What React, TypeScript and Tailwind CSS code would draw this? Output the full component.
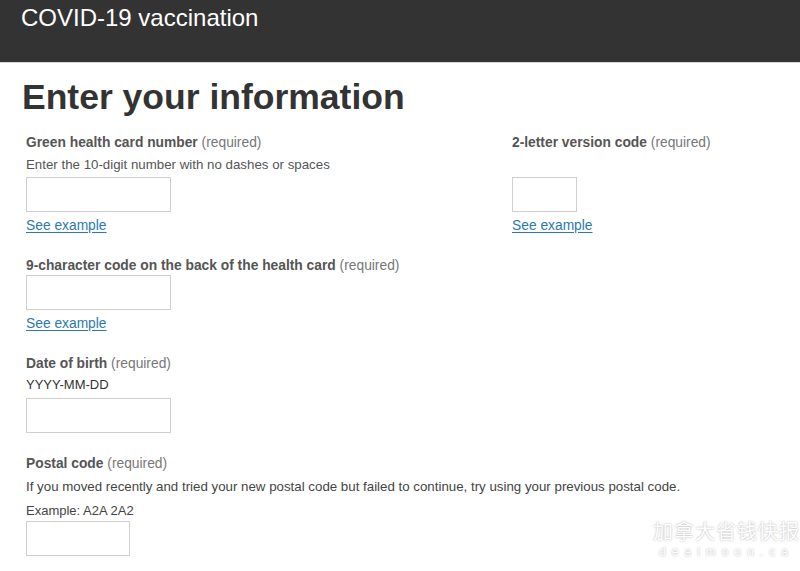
import React from "react";

type FieldProps = {
  label: string;
  hint?: string;
  hintDark?: boolean;
  inputWidth: string;
  inputGap?: string;
  example?: boolean;
  spacer?: boolean;
};

function Field({ label, hint, hintDark, inputWidth, inputGap = "mt-[1px]", example, spacer }: FieldProps) {
  return (
    <div className="flex flex-col">
      <div className="text-[13.8px] leading-[18px] text-[#555]">
        <span className="font-bold">{label}</span>{" "}
        <span className="text-[#777]">(required)</span>
      </div>
      {hint && (
        <div
          className={
            hintDark
              ? "mt-[3px] text-[13px] leading-[18px] text-[#333]"
              : "mt-[4px] text-[13.3px] leading-[18px] text-[#555]"
          }
        >
          {hint}
        </div>
      )}
      {spacer && <div className="h-[24px]" />}
      <input
        className={`${inputGap} h-[35px] ${inputWidth} border border-[#cfcfcf] bg-white outline-none`}
      />
      {example && (
        <a
          href="#"
          className="mt-[5px] self-start text-[13.8px] leading-[18px] text-[#2a7ab0] underline underline-offset-2"
        >
          See example
        </a>
      )}
    </div>
  );
}

export default function App() {
  return (
    <div
      className="relative h-[571px] w-[800px] overflow-hidden bg-white"
      style={{ fontFamily: '"Liberation Sans", Arial, sans-serif' }}
    >
      <header className="h-[63px] border-b border-[#d6d6d6] bg-[#333333] px-[21px] pt-[4px]">
        <div className="text-[24px] leading-[28px] text-white">COVID-19 vaccination</div>
      </header>

      <main className="px-[26px]">
        <h1 className="-ml-[4px] mt-[13px] text-[35.5px] font-bold leading-[43px] text-[#333]">
          Enter your information
        </h1>

        <div className="mt-[15px] flex">
          <div className="w-[486px]">
            <Field
              label="Green health card number"
              hint="Enter the 10-digit number with no dashes or spaces"
              inputWidth="w-[145px]"
              inputGap="mt-[3px]"
              example
            />
          </div>
          <div>
            <Field
              label="2-letter version code"
              inputWidth="w-[65px]"
              spacer
              example
            />
          </div>
        </div>

        <div className="mt-[22px]">
          <Field
            label="9-character code on the back of the health card"
            inputWidth="w-[145px]"
            inputGap="mt-0"
            example
          />
        </div>

        <div className="mt-[22px]">
          <Field
            label="Date of birth"
            hint="YYYY-MM-DD"
            hintDark
            inputWidth="w-[145px]"
            inputGap="mt-[4px]"
          />
        </div>

        <div className="mt-[22px] flex flex-col">
          <div className="text-[13.8px] leading-[18px] text-[#555]">
            <span className="font-bold">Postal code</span>{" "}
            <span className="text-[#777]">(required)</span>
          </div>
          <div className="mt-[5px] text-[13.3px] leading-[18px] text-[#444]">
            If you moved recently and tried your new postal code but failed to continue, try using your previous postal code.
          </div>
          <div className="mt-[6px] text-[13px] leading-[18px] text-[#444]">Example: A2A 2A2</div>
          <input className="mt-[1px] h-[35px] w-[104px] border border-[#cfcfcf] bg-white outline-none" />
        </div>
      </main>

      <div className="pointer-events-none absolute right-0 top-[520px] flex flex-col items-center">
        <div
          className="text-[20px] leading-[22px] tracking-[1px] text-white"
          style={{
            fontFamily: '"Noto Sans CJK SC", sans-serif',
            textShadow: "0 0 2px rgba(0,0,0,0.35)",
          }}
        >
          加拿大省钱快报
        </div>
        <div
          className="mt-[3px] text-[12px] leading-[14px] tracking-[6px] text-white"
          style={{ textShadow: "0 0 2px rgba(0,0,0,0.35)" }}
        >
          dealmoon.ca
        </div>
      </div>
    </div>
  );
}
